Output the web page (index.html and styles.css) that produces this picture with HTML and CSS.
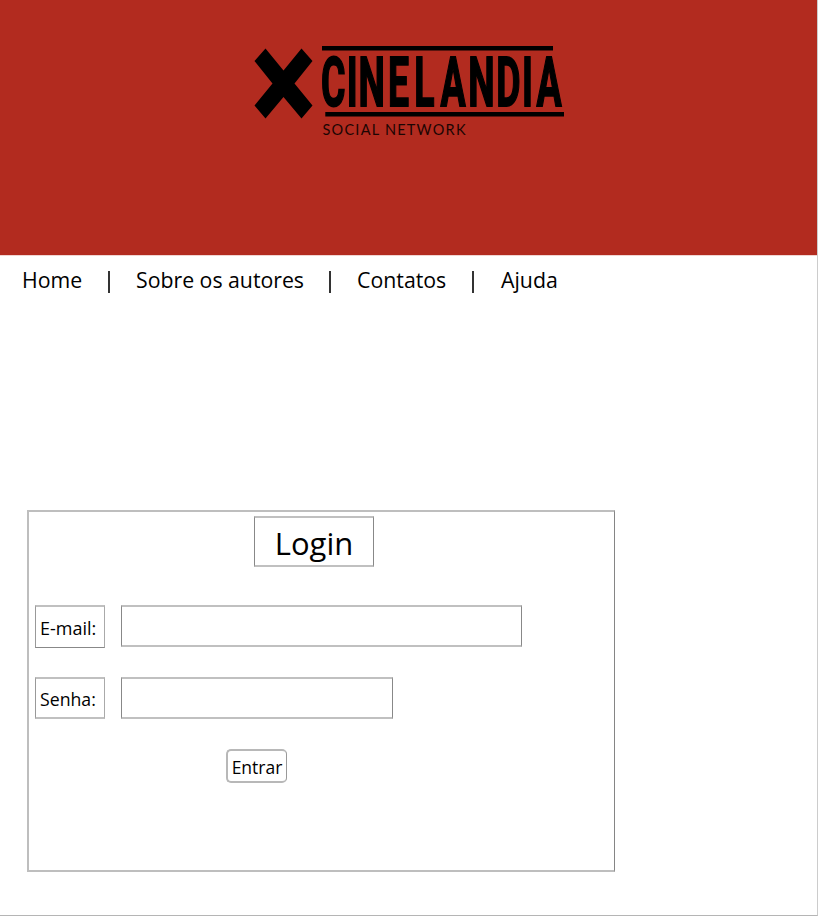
FILE: index.html
```html
<!DOCTYPE html>
<html lang="pt-BR">
<head>
<meta charset="utf-8">
<title>Cinelandia</title>
<link rel="stylesheet" href="styles.css">
</head>
<body>
<div class="page">
  <header class="banner">
    <svg class="logo" viewBox="250 40 320 100" width="320" height="100" role="img" aria-label="Cinelandia Social Network">
      <path d="M265.500 48.500 283.500 70.500 301.500 48.500 312.500 61 294.500 83.500 312.500 105.500 301.500 118.500 283.500 97 265.500 118.500 254.500 105.500 272.500 83.500 254.500 61Z"/>
      <path d="M322 46H553V50.500H322ZM325.300 112H564V116.500H325.300Z"/>
      <text class="wordmark" transform="scale(.55 1)" y="106.300" x="605.8 640.5 676 724.5 771.8 823.6 875.5 924.5 959.1 998.2">CINELANDIA</text>
      <text class="tagline" x="322.500" y="135" textLength="143">SOCIAL NETWORK</text>
    </svg>
  </header>
  <nav class="menu">
    <a class="home">Home</a><i class="bar"></i>
    <a class="authors">Sobre os autores</a><i class="bar"></i>
    <a class="contacts">Contatos</a><i class="bar"></i>
    <a class="help">Ajuda</a>
  </nav>
  <form class="login">
    <h1 class="title">Login</h1>
    <div class="row email"><label class="label" for="email">E-mail:</label><input class="field" id="email" type="text"></div>
    <div class="row password"><label class="label" for="senha">Senha:</label><input class="field" id="senha" type="password"></div>
    <button class="submit" type="button">Entrar</button>
  </form>
</div>
</body>
</html>
```
FILE: styles.css
```css
* { box-sizing: border-box; }
body { margin: 0; background: #fff; color: #000; font-family: "Open Sans", "Noto Sans", sans-serif; }
.page { width: 818px; height: 916px; border-right: 1px solid #ccc; border-bottom: 1px solid #b5b5b5; overflow: hidden; }
.banner { height: 255px; padding: 40px 0 0 250px; background: #b22b1f; box-shadow: 0 1px #f0d5d2; }
.logo { display: block; }
.wordmark { font: 700 68px Roboto, sans-serif; text-anchor: middle; stroke: #000; stroke-width: 1.8px; }
.tagline { font: 400 14.5px Lato, sans-serif; fill: #1c0503; }
.menu { display: flex; align-items: center; height: 49px; padding-left: 22px; font-size: 21.3px; white-space: nowrap; }
.home { width: 86px; }
.authors { width: 193px; letter-spacing: -.02px; }
.contacts { width: 115px; }
.help { padding-left: 1px; }
.bar { width: 2px; height: 22px; margin-right: 26px; background: #333; position: relative; top: 2px; }
.login { width: 588px; height: 362px; margin: 206px 0 0 27px; padding: 4px 0 0 6px; border: solid #bebebe; border-width: 2px 1px 2px 2px; border-right-color: #858585; }
.title { width: 120px; height: 51px; margin: 0 0 0 219px; border: solid #c0c0c0; border-width: 2px 1px; border-left-color: #888; border-right-color: #888; font-size: 31px; font-weight: 400; line-height: 50px; text-align: center; }
.row { display: flex; gap: 16px; align-items: flex-start; }
.email { height: 43px; margin-top: 38px; }
.password { height: 42px; margin-top: 29px; }
.label { width: 70px; height: 43px; padding-left: 4px; border: solid #c0c0c0; border-width: 2px 1px 1px; border-left-color: #999; border-right-color: #aaa; border-bottom-color: #888; font-size: 18px; line-height: 43px; white-space: nowrap; }
.password .label { height: 42px; font-size: 17.7px; line-height: 41px; border-bottom: 2px solid #c0c0c0; }
.field { width: 401px; height: 42px; padding: 0 6px; border: solid #c0c0c0; border-width: 2px 1px; border-left-color: #888; border-right-color: #888; border-radius: 0; background: #fff; font: inherit; }
.password .field { width: 272px; }
.submit { display: block; width: 61px; height: 34px; margin: 30px 0 0 191px; padding: 3px 0 0; border: solid #b8b8b8; border-width: 2px 1px 2px 2px; border-right-color: #999; border-radius: 5px; background: #fff; color: #000; font: 17.5px/27px "Open Sans", sans-serif; }
```
